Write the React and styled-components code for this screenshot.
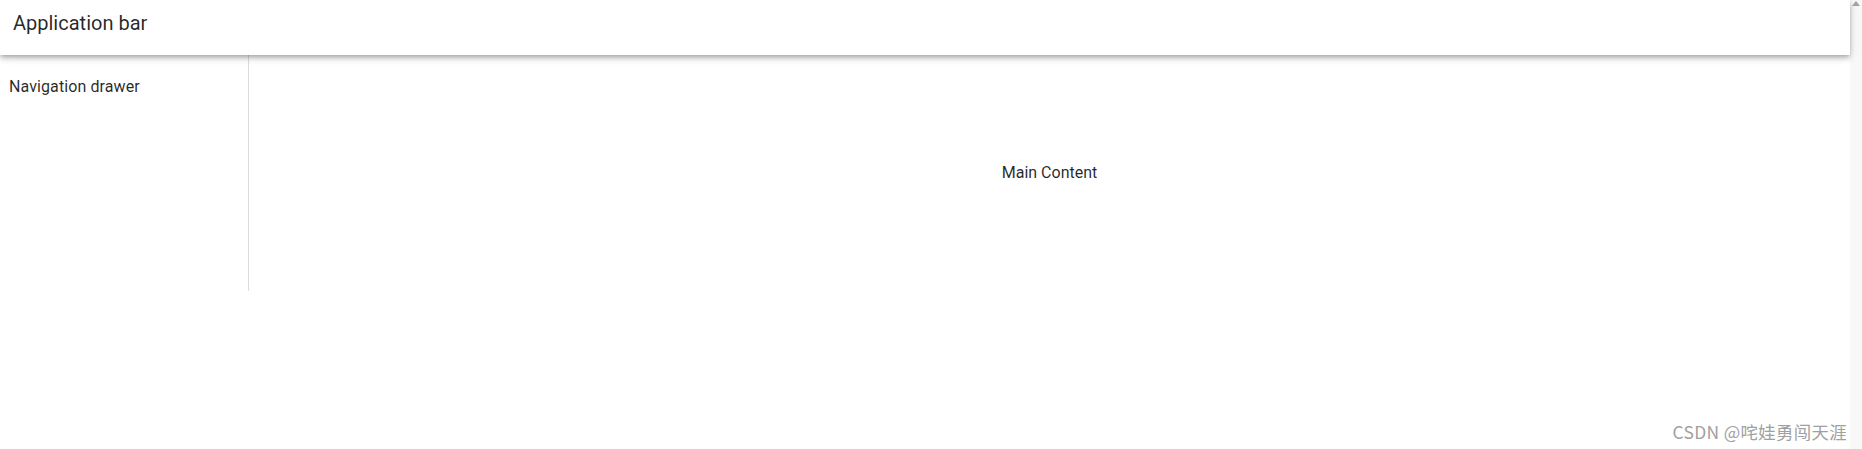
import React from 'react'
import styled, { createGlobalStyle } from 'styled-components'

const GlobalStyle = createGlobalStyle`
    html, body {
        margin: 0;
        padding: 0;
        background: #fff;
        overflow: hidden;
    }
    body {
        font-family: Roboto, "Noto Sans", sans-serif;
        color: rgba(0, 0, 0, 0.85);
    }
`

const Page = styled.div`
    position: relative;
    display: flex;
    width: 100vw;
    height: 100vh;
`

const Frame = styled.div`
    flex: 1;
    display: flex;
    flex-direction: column;
    min-width: 0;
`

const AppBar = styled.header`
    position: relative;
    z-index: 2;
    height: 55px;
    box-sizing: border-box;
    padding: 11px 13px 0;
    background: #fff;
    font-size: 20px;
    line-height: 24px;
    box-shadow: 0 2px 4px -1px rgba(0, 0, 0, 0.2), 0 4px 5px 0 rgba(0, 0, 0, 0.14), 0 1px 10px 0 rgba(0, 0, 0, 0.12);
`

const Body = styled.div`
    display: flex;
    height: 236px;
`

const Drawer = styled.nav`
    flex-shrink: 0;
    width: 249px;
    box-sizing: border-box;
    padding: 22px 0 0 9px;
    border-right: 1px solid #dcdcdc;
    font-size: 16px;
    letter-spacing: 0.1px;
    line-height: 20px;
`

const Content = styled.main`
    flex: 1;
    display: flex;
    align-items: center;
    justify-content: center;
    font-size: 16px;
    line-height: 20px;
`

const ScrollTrack = styled.div`
    width: 12px;
    flex-shrink: 0;
    background: #f8f8f8;
    display: flex;
    justify-content: center;
    padding-top: 1px;
    box-sizing: border-box;
`

const Arrow = styled.div`
    width: 0;
    height: 0;
    border-left: 4px solid transparent;
    border-right: 4px solid transparent;
    border-bottom: 5px solid #a3a3a3;
`

const Watermark = styled.div`
    position: absolute;
    right: 15px;
    bottom: 7px;
    font-family: "Noto Sans CJK SC", "Liberation Sans", sans-serif;
    font-size: 17.4px;
    letter-spacing: 0.35px;
    line-height: 20px;
    color: #a0a0a0;
`

const App = () => {
    return (
        <Page>
            <GlobalStyle />
            <Frame>
                <AppBar>Application bar</AppBar>
                <Body>
                    <Drawer>Navigation drawer</Drawer>
                    <Content>Main Content</Content>
                </Body>
            </Frame>
            <ScrollTrack>
                <Arrow />
            </ScrollTrack>
            <Watermark>CSDN @咤娃勇闯天涯</Watermark>
        </Page>
    )
}

export default App
